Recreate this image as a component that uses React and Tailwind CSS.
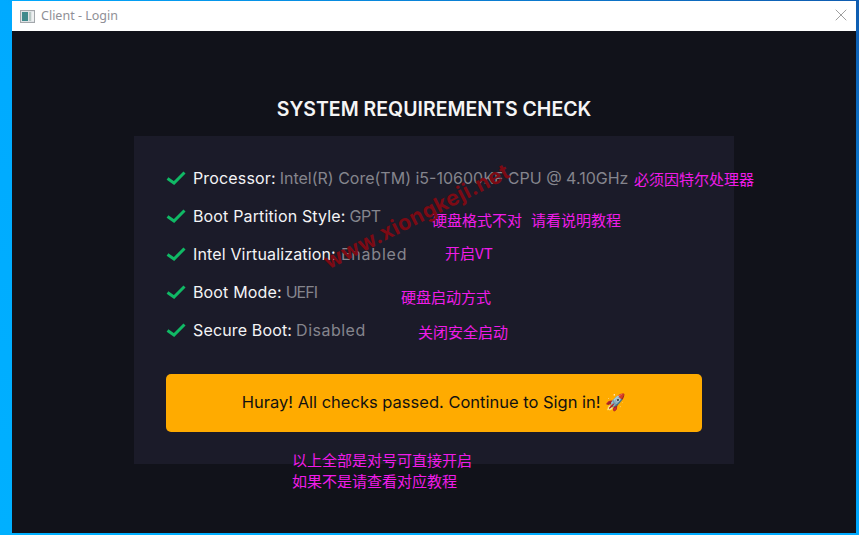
import { X } from 'lucide-react';

const checks = [
  { label: 'Processor:', value: 'Intel(R) Core(TM) i5-10600KF CPU @ 4.10GHz', valueCls: 'ml-[4px]' },
  { label: 'Boot Partition Style:', value: 'GPT', valueCls: 'ml-[4px] tracking-[-0.4px]' },
  { label: 'Intel Virtualization:', value: 'Enabled', valueCls: 'ml-[5px] tracking-[0.8px]' },
  { label: 'Boot Mode:', value: 'UEFI', valueCls: 'ml-[4px] tracking-[-1px]' },
  { label: 'Secure Boot:', value: 'Disabled', valueCls: 'ml-[4px] tracking-[0.5px]' },
];

const notes = [
  { text: '必须因特尔处理器', cls: 'left-[634px] top-[169px]' },
  { text: '硬盘格式不对', cls: 'left-[432px] top-[210px]' },
  { text: '请看说明教程', cls: 'left-[531px] top-[210px]' },
  { text: '开启VT', cls: 'left-[445px] top-[243px]' },
  { text: '硬盘启动方式', cls: 'left-[401px] top-[287px]' },
  { text: '关闭安全启动', cls: 'left-[418px] top-[322px]' },
  { text: '以上全部是对号可直接开启', cls: 'left-[292px] top-[450px]' },
  { text: '如果不是请查看对应教程', cls: 'left-[292px] top-[471px]' },
];

const CheckMark = () => (
  <svg width="20" height="14" viewBox="0 0 20 14" fill="none" className="mr-[7px]">
    <path d="M1.5 7.5 L8 12 L18.5 1.5" stroke="#10b965" strokeWidth="3" />
  </svg>
);

const App = () => {
  return (
    <div className="relative h-[535px] w-[859px] overflow-hidden bg-linear-to-tr from-[#00b0ff] via-[#00aaff] to-[#0f5cb0] pl-[12px] pr-[3px] pt-[1px] pb-[2px] font-['Inter','Noto_Sans',sans-serif]">
      <div className="flex h-full flex-col">
        {/* Title bar */}
        <div className="flex h-[30px] items-center justify-between bg-white pl-[8px] pr-[5px]">
          <div className="flex items-center gap-[6px]">
            <svg width="15" height="13" viewBox="0 0 15 13">
              <rect x="0.5" y="0.5" width="14" height="12" fill="#dfe3e6" stroke="#a3a7ab" />
              <rect x="2" y="2" width="6" height="9" fill="#3f8a8c" />
              <rect x="9" y="2" width="2" height="9" fill="#b9c9c4" />
              <rect x="12" y="2" width="2" height="9" fill="#eef1f1" />
            </svg>
            <span className="text-[12.5px] text-[#8f8f96] font-['Noto_Sans',sans-serif]">Client - Login</span>
          </div>
          <X className="h-[20px] w-[20px] -translate-y-px text-[#8c8c8c]" strokeWidth={1} />
        </div>

        {/* Body */}
        <div className="flex flex-1 flex-col items-center bg-[#11121a] pt-[64px]">
          <h1 className="text-[19.5px] font-semibold leading-[28px] text-[#f5f5f5]">SYSTEM REQUIREMENTS CHECK</h1>
          <div className="mt-[13px] flex h-[328px] w-[600px] flex-col bg-[#1b1b29] px-[32px] pt-[23px]">
            <ul className="flex flex-col">
              {checks.map((item) => (
                <li key={item.label} className="flex h-[38px] items-center whitespace-nowrap text-[16px]">
                  <CheckMark />
                  <span className="tracking-[0.15px] text-[#f4f4f6]">{item.label}</span>
                  <span className={`text-[#85858d] ${item.valueCls}`}>{item.value}</span>
                </li>
              ))}
            </ul>
            <button className="mt-[25px] flex h-[58px] w-full items-center justify-center rounded-[5px] bg-[#ffab00] pb-[2px] text-[16.5px] text-[#111111]">
              Huray! All checks passed. Continue to Sign in! 🚀
            </button>
          </div>
        </div>
      </div>

      {/* Annotations drawn over the screenshot */}
      {notes.map((note) => (
        <span
          key={note.text}
          className={`absolute whitespace-nowrap text-[15px] leading-[20px] text-[#f01ce8] font-['Noto_Sans_CJK_SC',sans-serif] ${note.cls}`}
        >
          {note.text}
        </span>
      ))}
      <span className="absolute left-[314px] top-[203px] w-[204px] -rotate-[27deg] whitespace-nowrap text-center text-[21.5px] font-bold leading-[26px] tracking-[0.5px] text-[#7c0a14]">
        www.xiongkeji.net
      </span>
    </div>
  );
};

export default App;
